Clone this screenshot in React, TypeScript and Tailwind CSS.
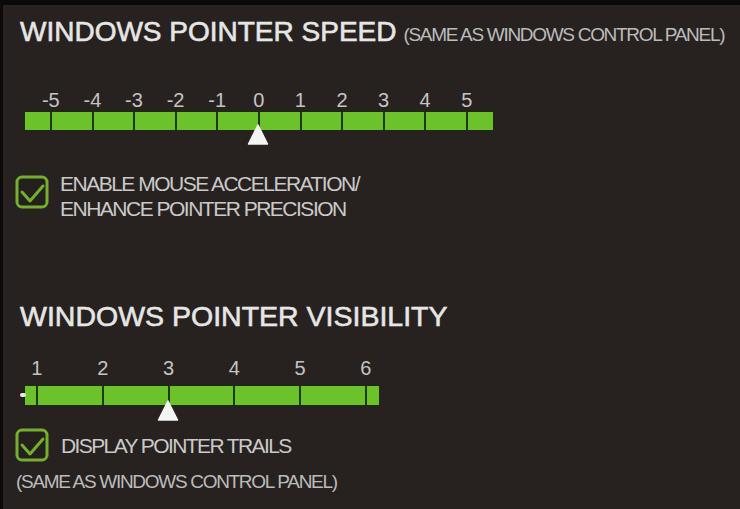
const speedLabels = ["-5", "-4", "-3", "-2", "-1", "0", "1", "2", "3", "4", "5"];
const trailLabels = ["1", "2", "3", "4", "5", "6"];

const font = { fontFamily: '"Liberation Sans", Arial, sans-serif' };

function Pointer() {
  return (
    <svg width="22" height="21" viewBox="0 0 22 21" className="block">
      <path d="M11 1 L20.5 20 L1.5 20 Z" fill="#f4f4f4" stroke="#f4f4f4" strokeWidth="1.5" strokeLinejoin="round" />
    </svg>
  );
}

function CheckBox() {
  return (
    <svg width="34" height="34" viewBox="0 0 34 34" className="block shrink-0">
      <rect x="2" y="2" width="30" height="30" rx="5" fill="#23201d" stroke="#74b02e" strokeWidth="3" />
      <polyline points="7,17 15,26 28,11" fill="none" stroke="#74b02e" strokeWidth="3" strokeLinejoin="round" strokeLinecap="round" />
    </svg>
  );
}

function SpeedSlider() {
  return (
    <div className="ml-[22px] w-[468px]">
      <div className="mt-[44px] flex pl-[5px] text-[20px] leading-[20px] text-[#c4c4c4]">
        {speedLabels.map((l) => (
          <span key={l} className="w-[41.6px] shrink-0 text-center">
            {l}
          </span>
        ))}
      </div>
      <div className="relative mt-[2px] flex h-[18px] bg-[#6cc22a] shadow-[0_0_0_1px_#1c2a12]">
        <div className="w-[25px] shrink-0" />
        {speedLabels.slice(1).map((l) => (
          <div key={l} className="w-[41.6px] shrink-0 border-l-2 border-[#1d3a0e]" />
        ))}
        <div className="w-[27px] shrink-0 border-l-2 border-[#1d3a0e]" />
        <div className="absolute left-[222px] top-[12px]">
          <Pointer />
        </div>
      </div>
    </div>
  );
}

function TrailSlider() {
  return (
    <div className="ml-[22px] w-[354px]">
      <div className="-ml-[21px] mt-[28px] flex text-[20px] leading-[20px] text-[#c4c4c4]">
        {trailLabels.map((l) => (
          <span key={l} className="w-[65.8px] shrink-0 text-center">
            {l}
          </span>
        ))}
      </div>
      <div className="relative mt-[8px] flex h-[19px] bg-[#6cc22a] shadow-[0_0_0_1px_#1c2a12]">
        <div className="absolute -left-[5px] top-[7px] h-[4px] w-[6px] rounded-sm bg-[#e8e8e8]" />
        <div className="w-[11px] shrink-0" />
        {trailLabels.slice(1).map((l) => (
          <div key={l} className="w-[65.8px] shrink-0 border-l-2 border-[#1d3a0e]" />
        ))}
        <div className="w-[14px] shrink-0 border-l-2 border-[#1d3a0e]" />
        <div className="absolute left-[132px] top-[14px]">
          <Pointer />
        </div>
      </div>
    </div>
  );
}

export default function App() {
  return (
    <div
      className="h-[509px] w-[740px] overflow-hidden border-l-[3px] border-t-[5px] border-[#0b0909] bg-[#272220]"
      style={font}
    >
      <div className="flex flex-col">
        <div className="ml-[17px] mt-[13px] flex h-[28px] items-baseline whitespace-nowrap">
          <h1 className="text-[28px] leading-[28px] text-[#e6e6e6] [-webkit-text-stroke:0.6px_#e6e6e6]">
            WINDOWS POINTER SPEED
          </h1>
          <span className="ml-[7px] text-[19px] leading-[19px] tracking-[-1.3px] text-[#bcbcbc]">
            (SAME AS WINDOWS CONTROL PANEL)
          </span>
        </div>

        <SpeedSlider />

        <div className="ml-[12px] mt-[45px] flex items-start gap-[11px]">
          <CheckBox />
          <p className="-mt-[4px] text-[21px] leading-[25px] tracking-[-1.5px] text-[#cacaca]">
            ENABLE MOUSE ACCELERATION/
            <br />
            ENHANCE POINTER PRECISION
          </p>
        </div>

        <h2 className="ml-[17px] mt-[81px] text-[28.5px] leading-[28px] text-[#e6e6e6] [-webkit-text-stroke:0.6px_#e6e6e6]">
          WINDOWS POINTER VISIBILITY
        </h2>

        <TrailSlider />

        <div className="ml-[12px] mt-[23px] flex items-center gap-[12px]">
          <CheckBox />
          <span className="text-[21px] leading-[25px] tracking-[-1.6px] text-[#cacaca]">
            DISPLAY POINTER TRAILS
          </span>
        </div>

        <p className="ml-[13px] mt-[10px] text-[19px] leading-[20px] tracking-[-1.3px] text-[#bcbcbc]">
          (SAME AS WINDOWS CONTROL PANEL)
        </p>
      </div>
    </div>
  );
}
